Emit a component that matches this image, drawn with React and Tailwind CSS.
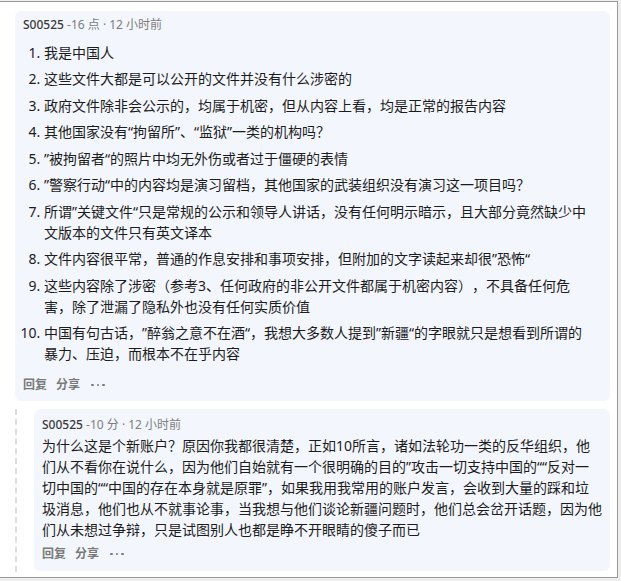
import React from "react";

const items = [
  ["我是中国人"],
  ["这些文件大都是可以公开的文件并没有什么涉密的"],
  ["政府文件除非会公示的，均属于机密，但从内容上看，均是正常的报告内容"],
  ["其他国家没有“拘留所”、“监狱”一类的机构吗？"],
  ["”被拘留者“的照片中均无外伤或者过于僵硬的表情"],
  ["”警察行动“中的内容均是演习留档，其他国家的武装组织没有演习这一项目吗？"],
  [
    "所谓”关键文件“只是常规的公示和领导人讲话，没有任何明示暗示，且大部分竟然缺少中",
    "文版本的文件只有英文译本",
  ],
  ["文件内容很平常，普通的作息安排和事项安排，但附加的文字读起来却很”恐怖“"],
  [
    "这些内容除了涉密（参考3、任何政府的非公开文件都属于机密内容），不具备任何危",
    "害，除了泄漏了隐私外也没有任何实质价值",
  ],
  [
    "中国有句古话，”醉翁之意不在酒“，我想大多数人提到”新疆“的字眼就只是想看到所谓的",
    "暴力、压迫，而根本不在乎内容",
  ],
];

const reply = [
  "为什么这是个新账户？原因你我都很清楚，正如10所言，诸如法轮功一类的反华组织，他",
  "们从不看你在说什么，因为他们自始就有一个很明确的目的”攻击一切支持中国的““反对一",
  "切中国的““中国的存在本身就是原罪”，如果我用我常用的账户发言，会收到大量的踩和垃",
  "圾消息，他们也从不就事论事，当我想与他们谈论新疆问题时，他们总会岔开话题，因为他",
  "们从未想过争辩，只是试图别人也都是睁不开眼睛的傻子而已",
];

const Meta = ({ score }) => (
  <div className="text-[12px] leading-[20px] text-[#7d7d7d]">
    <span className="font-medium text-[#3a3a3a]">S00525</span> -{score} · 12 小时前
  </div>
);

const Actions = () => (
  <div className="flex items-center h-[24px] text-[12px] font-semibold text-[#7a7a7a]">
    <span>回复</span>
    <span className="ml-[9px]">分享</span>
    <span className="ml-[11px] flex gap-[3px]">
      <i className="block w-[2.5px] h-[2.5px] rounded-full bg-[#7a7a7a]" />
      <i className="block w-[2.5px] h-[2.5px] rounded-full bg-[#7a7a7a]" />
      <i className="block w-[2.5px] h-[2.5px] rounded-full bg-[#7a7a7a]" />
    </span>
  </div>
);

const App = () => {
  return (
    <div
      className="w-[621px] h-[581px] bg-[#eeeeee] pt-[1px] overflow-hidden [text-spacing-trim:space-all]"
      style={{ fontFamily: '"Noto Sans", "Noto Sans CJK SC", sans-serif' }}
    >
      <div className="w-[618px] h-[577px] bg-white border-t border-r border-b border-[#9a9a9a] pt-[9px] pl-[15px] text-[#1c1c1c]">
        <div className="w-[595px] rounded-[6px] bg-[#f3f6fc] px-2 pt-[4px] pb-[4px]">
          <Meta score="16 点" />
          <ol className="list-decimal pl-[21px] mt-[6.5px] text-[14px] leading-[21px] flex flex-col gap-[5.5px]">
            {items.map((lines, i) => (
              <li key={i}>
                {lines.map((l, j) => (
                  <span key={j} className="block whitespace-nowrap">
                    {l}
                  </span>
                ))}
              </li>
            ))}
          </ol>
          <div className="mt-[9px]">
            <Actions />
          </div>
        </div>

        <div className="mt-[8px] border-l-2 border-dashed border-[#dedede] pl-[17px] pb-[1px]">
          <div className="w-[576px] rounded-[6px] bg-[#f3f6fc] px-2 pt-[6px] pb-[5px]">
            <Meta score="10 分" />
            <div className="text-[14px] leading-[21px]">
              {reply.map((l, i) => (
                <span key={i} className="block whitespace-nowrap">
                  {l}
                </span>
              ))}
            </div>
            <div className="mt-[2px]">
              <Actions />
            </div>
          </div>
        </div>
      </div>
    </div>
  );
};

export default App;
